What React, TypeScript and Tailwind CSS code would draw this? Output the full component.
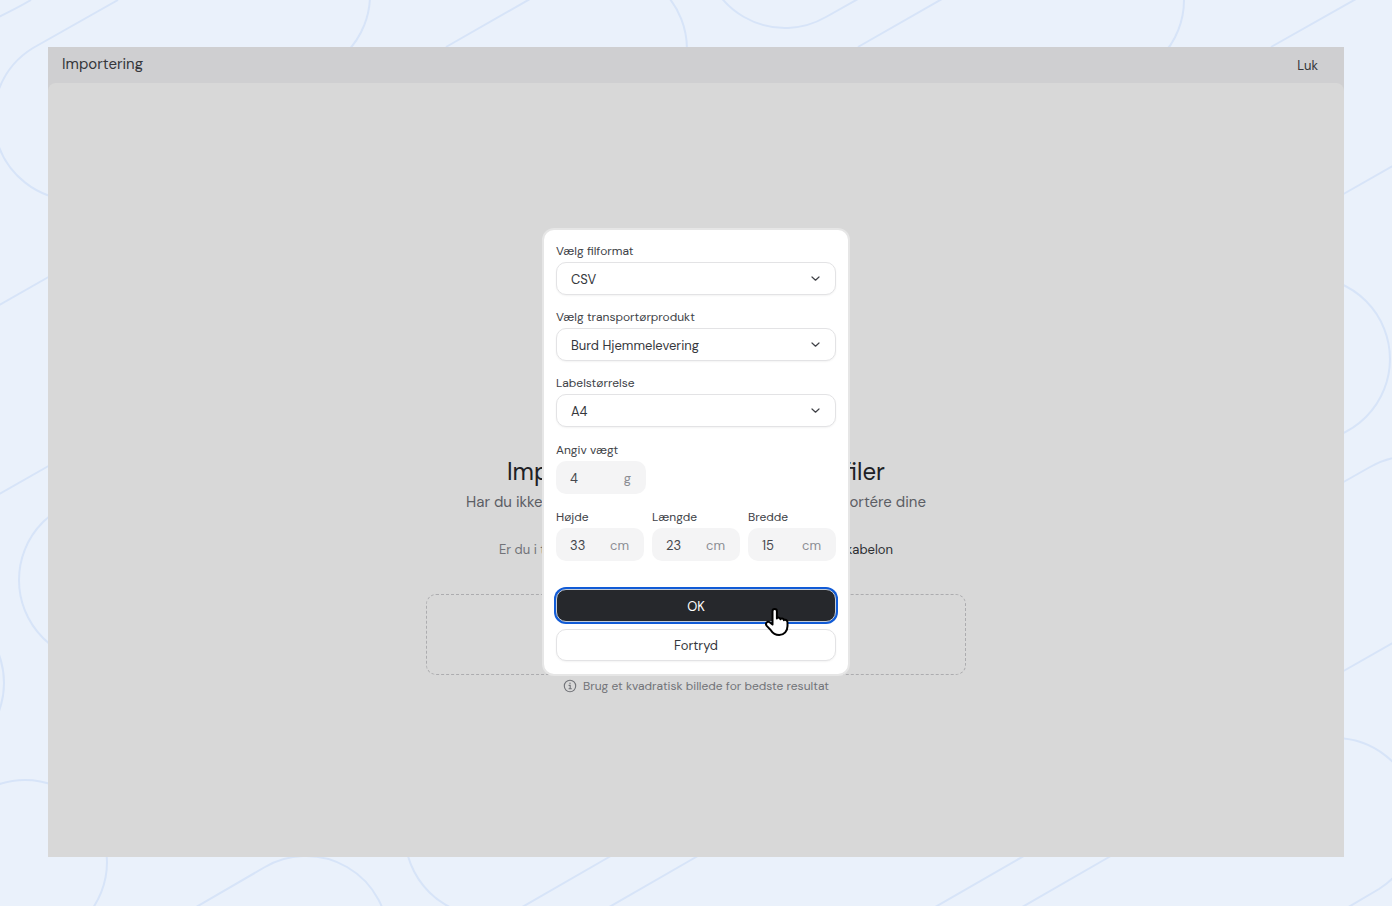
import type { ReactNode } from 'react';

interface SelectFieldProps {
  id: string;
  label: string;
  options: string[];
}

interface UnitFieldProps {
  id: string;
  label: string;
  value: string;
  unit: string;
}

interface SplitLineProps {
  start: ReactNode;
  end: ReactNode;
  className: string;
}

const labelClass = 'mb-0.5 text-xs leading-[18px] text-[#404247]';

function Backdrop() {
  return (
    <svg
      aria-hidden="true"
      viewBox="0 0 1392 906"
      preserveAspectRatio="xMidYMid slice"
      className="absolute inset-0 h-full w-full"
      fill="none"
      stroke="#d7e4f8"
      strokeWidth="2"
    >
      <path d="M-10 21Q14 10 31 0M118 0L33 48A82 82 0 0 0 74 200" />
      <path d="M370 -5A82 82 0 0 1 288 77" />
      <path d="M446 47L530 -1M605 -33A82 82 0 0 1 605 131" />
      <path d="M703 -54A82 82 0 0 0 826 17L874 -10M858 47L942 -1" />
      <path d="M1184 0A82 82 0 0 1 1102 82" />
      <path d="M1271 47L1356 -1M1340 196L1396 164" />
      <path d="M1308 277A82 82 0 0 1 1308 441M1340 484L1370 467A82 82 0 0 1 1411 456" />
      <path d="M1340 673L1396 641M1337 738A82 82 0 0 1 1379 889L1340 912" />
      <path d="M-4 307L52 275M-4 496L52 464" />
      <circle cx="101" cy="580" r="82" />
      <circle cx="-78" cy="683" r="82" />
      <circle cx="25" cy="862" r="82" />
      <path d="M191 910L265 867A82 82 0 0 1 388 938" />
      <path d="M405 834A82 82 0 0 0 487 916" />
      <path d="M517 910L616 853M604 910L703 853M930 910L1029 853M1017 910L1116 853" />
    </svg>
  );
}

function SelectField({ id, label, options }: SelectFieldProps) {
  return (
    <div className="flex flex-col">
      <label htmlFor={id} className={labelClass}>
        {label}
      </label>
      <div className="relative">
        <select
          id={id}
          className="h-[33px] w-full appearance-none rounded-[10px] border border-[#e3e3e5] bg-white pt-0.5 pr-9 pl-3.5 text-[13px] text-[#35373c] shadow-xs"
        >
          {options.map((option) => (
            <option key={option}>{option}</option>
          ))}
        </select>
        <svg
          aria-hidden="true"
          viewBox="0 0 16 16"
          className="pointer-events-none absolute top-2 right-3 h-4 w-4"
          fill="none"
          stroke="#404247"
          strokeWidth="1.2"
          strokeLinecap="round"
          strokeLinejoin="round"
        >
          <path d="M4 7L7.500 10.200L11 7" />
        </svg>
      </div>
    </div>
  );
}

function UnitField({ id, label, value, unit }: UnitFieldProps) {
  return (
    <div className="flex flex-col">
      <label htmlFor={id} className={labelClass}>
        {label}
      </label>
      <div className="flex h-[33px] items-center rounded-[10px] bg-[#f4f4f5] pt-0.5 pr-[15px] pl-3.5 text-[13px]">
        <input id={id} defaultValue={value} className="w-full min-w-0 bg-transparent text-[#46484d] outline-none" />
        <span className="text-[#8b8d93]">{unit}</span>
      </div>
    </div>
  );
}

function SplitLine({ start, end, className }: SplitLineProps) {
  return (
    <div className={`flex max-w-full justify-between ${className}`}>
      <span>{start}</span>
      <span>{end}</span>
    </div>
  );
}

function ImportDialog() {
  return (
    <form
      role="dialog"
      aria-modal="true"
      className="relative w-[308px] rounded-xl border-2 border-[#e6e6e6] bg-white px-3 pt-3 pb-[13px]"
    >
      <div className="flex flex-col gap-[13px]">
        <SelectField id="format" label="Vælg filformat" options={['CSV']} />
        <SelectField id="product" label="Vælg transportørprodukt" options={['Burd Hjemmelevering']} />
        <SelectField id="size" label="Labelstørrelse" options={['A4']} />
      </div>
      <div className="mt-3.5 w-[90px]">
        <UnitField id="weight" label="Angiv vægt" value="4" unit="g" />
      </div>
      <div className="mt-3.5 grid grid-cols-3 gap-2">
        <UnitField id="height" label="Højde" value="33" unit="cm" />
        <UnitField id="length" label="Længde" value="23" unit="cm" />
        <UnitField id="width" label="Bredde" value="15" unit="cm" />
      </div>
      <div className="mt-7 flex flex-col gap-[7px] text-[13px]">
        <button
          type="button"
          className="h-[33px] rounded-[10px] border border-[#c3ccd8] bg-[#26282c] pt-0.5 text-white ring-2 ring-[#115bd6]"
        >
          OK
        </button>
        <button
          type="button"
          className="h-8 rounded-[10px] border border-[#e3e3e5] bg-white pt-0.5 text-[#35373c] shadow-xs"
        >
          Fortryd
        </button>
      </div>
      <svg
        aria-hidden="true"
        viewBox="0 0 26 30"
        className="pointer-events-none absolute right-[58px] bottom-[37px] h-[30px] w-[26px]"
        fill="#fff"
        stroke="#000"
        strokeWidth="2"
        strokeLinejoin="round"
        strokeLinecap="round"
      >
        <path d="M8.500 17.500V4.200a2.200 2.200 0 0 1 4.400 0V11.500c.4-1.300 3.300-1.200 3.500.7.600-1.200 3.200-.9 3.500 1 .8-.9 3.600-.4 3.600 2V19c0 5-3.300 9-8.300 9-4.300 0-6.600-2-8.200-4.600L2.500 18.600C.9 16 3.600 13.700 5.700 15.200z" />
      </svg>
    </form>
  );
}

export default function App() {
  return (
    <div className="relative flex min-h-screen flex-col bg-[#eaf1fb] px-12 pt-[47px] pb-[49px] font-['DM_Sans',Inter,sans-serif]">
      <Backdrop />
      <div className="relative flex flex-1 flex-col bg-[#f4f4f6]">
        <header className="flex h-9 items-center justify-between pr-[26px] pl-3.5 text-[#404247]">
          <h1 className="pb-0.5 text-[15px]">Importering</h1>
          <button type="button" className="pt-0.5 text-[13px]">
            Luk
          </button>
        </header>
        <main className="flex flex-1 flex-col items-center rounded-t-lg bg-[#fefefe] pt-[375px]">
          <SplitLine start="Importér" end="filer" className="w-[378px] text-2xl leading-7 text-[#25262b]" />
          <SplitLine
            start="Har du ikke"
            end="importére dine"
            className="mt-0.5 w-[460px] text-[15px] leading-7 text-[#6d6f76]"
          />
          <SplitLine
            start="Er du i tvivl"
            end={
              <a href="#skabelon" className="text-[#35373c]">
                skabelon
              </a>
            }
            className="mt-[22px] w-[394px] text-[13px] leading-6 text-[#86888e]"
          />
          <div className="mt-8 h-[81px] w-[540px] max-w-full rounded-[10px] border border-dashed border-[#cbcbce]" />
          <p className="mt-px flex items-center gap-1.5 text-xs leading-5 text-[#86888e]">
            <svg aria-hidden="true" viewBox="0 0 14 14" className="h-3.5 w-3.5" fill="none" stroke="currentColor" strokeWidth="1.1">
              <circle cx="7" cy="7" r="5.700" />
              <path d="M5.600 6.400H7.200V9.800M5.600 9.800H8.800" />
              <circle cx="7" cy="4.200" r=".7" fill="currentColor" stroke="none" />
            </svg>
            Brug et kvadratisk billede for bedste resultat
          </p>
        </main>
        <div className="absolute inset-0 flex items-center justify-center bg-black/15">
          <ImportDialog />
        </div>
      </div>
    </div>
  );
}
